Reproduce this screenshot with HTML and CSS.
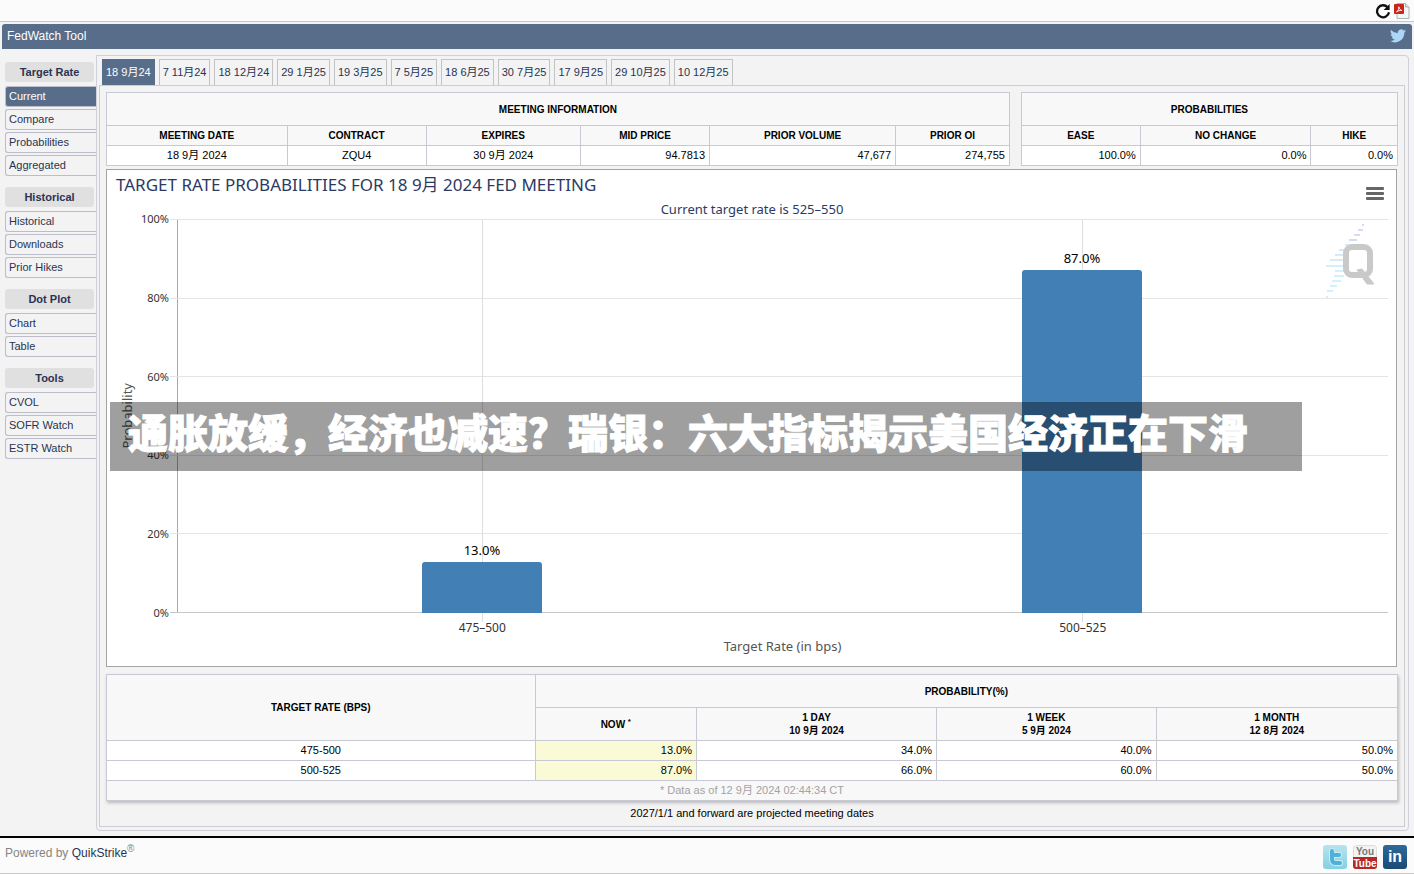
FILE: index.html
```html
<!DOCTYPE html>
<html lang="zh">
<head>
<meta charset="utf-8">
<title>FedWatch Tool</title>
<link rel="stylesheet" href="styles.css">
</head>
<body>
<div class="toolbar">
  <button class="icon-btn" type="button" aria-label="Refresh">
    <svg width="16" height="16" viewBox="0 0 16 16"><path d="M12.6 4.3A6 6 0 1 0 14 9.3" fill="none" stroke="#111" stroke-width="2.3"/><path d="M14.6 1v6H8.6z" fill="#111"/></svg>
  </button>
  <button class="icon-btn" type="button" aria-label="PDF">
    <svg width="16" height="16" viewBox="0 0 16 16"><path d="M3 .5h8.500l3.500 3.500v11.500H3z" fill="#f4f6f6" stroke="#a9b5b5"/><path d="M11.500.5v3.500H15" fill="#dde4e4" stroke="#a9b5b5"/><rect x="0" y="1" width="10" height="10" rx="1" fill="#c9251c"/><path d="M2.500 9C4.500 7.500 5 5.500 4.800 3.800 5.200 6 6.500 7.300 8 7.500 6 7.200 4 7.800 2.500 9z" fill="none" stroke="#fff" stroke-width=".9"/></svg>
  </button>
</div>
<header class="title-bar">
  <span>FedWatch Tool</span>
  <a href="#" class="bird" aria-label="Twitter"><svg width="16" height="14" viewBox="0 0 24 20"><path fill="#acd6f5" d="M24 2.400a10 10 0 0 1-2.800.8A5 5 0 0 0 23.300.4a10 10 0 0 1-3.100 1.200A4.900 4.900 0 0 0 11.800 6 14 14 0 0 1 1.700.9a4.900 4.900 0 0 0 1.500 6.600A5 5 0 0 1 1 6.900c0 2.400 1.700 4.400 3.900 4.900a5 5 0 0 1-2.200.1 4.900 4.900 0 0 0 4.600 3.400A9.900 9.900 0 0 1 0 17.300 14 14 0 0 0 21.500 4.900 10 10 0 0 0 24 2.400z"/></svg></a>
</header>

<div class="layout">
  <nav class="sidebar">
    <section class="group">
      <h2>Target Rate</h2>
      <a href="#" class="active">Current</a><a href="#">Compare</a><a href="#">Probabilities</a><a href="#">Aggregated</a>
    </section>
    <section class="group">
      <h2>Historical</h2>
      <a href="#">Historical</a><a href="#">Downloads</a><a href="#">Prior Hikes</a>
    </section>
    <section class="group">
      <h2>Dot Plot</h2>
      <a href="#">Chart</a><a href="#">Table</a>
    </section>
    <section class="group">
      <h2>Tools</h2>
      <a href="#">CVOL</a><a href="#">SOFR Watch</a><a href="#">ESTR Watch</a>
    </section>
  </nav>

  <main class="panel">
    <div class="tabs">
      <a href="#" class="active">18 9月24</a><a href="#">7 11月24</a><a href="#">18 12月24</a><a href="#">29 1月25</a><a href="#">19 3月25</a><a href="#">7 5月25</a><a href="#">18 6月25</a><a href="#">30 7月25</a><a href="#">17 9月25</a><a href="#">29 10月25</a><a href="#">10 12月25</a>
    </div>
    <div class="content">
      <div class="info">
        <table class="grid meeting">
          <colgroup><col class="w20"><col class="w15"><col class="w17"><col class="w14"><col class="w21"><col></colgroup>
          <thead>
            <tr class="tall"><th colspan="6">MEETING INFORMATION</th></tr>
            <tr><th>MEETING DATE</th><th>CONTRACT</th><th>EXPIRES</th><th>MID PRICE</th><th>PRIOR VOLUME</th><th>PRIOR OI</th></tr>
          </thead>
          <tbody>
            <tr><td class="mid">18 9月 2024</td><td class="mid">ZQU4</td><td class="mid">30 9月 2024</td><td>94.7813</td><td>47,677</td><td>274,755</td></tr>
          </tbody>
        </table>
        <table class="grid odds">
          <colgroup><col class="w32"><col class="w45"><col></colgroup>
          <thead>
            <tr class="tall"><th colspan="3">PROBABILITIES</th></tr>
            <tr><th>EASE</th><th>NO CHANGE</th><th>HIKE</th></tr>
          </thead>
          <tbody>
            <tr><td>100.0%</td><td>0.0%</td><td>0.0%</td></tr>
          </tbody>
        </table>
      </div>

      <section class="chart">
        <h1>TARGET RATE PROBABILITIES FOR 18 9月 2024 FED MEETING</h1>
        <p class="subtitle">Current target rate is 525–550</p>
        <button class="menu" type="button" aria-label="Chart menu"><i></i><i></i><i></i></button>
        <div class="plot-row">
          <div class="y-title"><span>Probability</span></div>
          <div class="y-labels"><span>100%</span><span>80%</span><span>60%</span><span>40%</span><span>20%</span><span>0%</span></div>
          <div class="plot">
            <div class="bands"><i></i><i></i><i></i><i></i><i></i></div>
            <svg class="watermark" width="50" height="76" viewBox="0 0 50 76">
              <g stroke-width="2">
                <path stroke="#d3dbf5" d="M36 2h2M32 7h5M28 12h6M23 17h8"/>
                <path stroke="#d5ecf8" d="M19 22h8M13 27h8M9 32h9M4 37h14"/>
                <path stroke="#d3f1fb" d="M0 43h18M9 48h9M8 53h10M6 58h9M4 63h7M1 68h6M0 74h2"/>
              </g>
              <rect x="20" y="24" width="24" height="28" rx="6" fill="none" stroke="#c9c9c9" stroke-width="6"/>
              <path d="M31 47l5-1 12 15h-7z" fill="#c9c9c9" stroke="#c9c9c9"/>
            </svg>
            <div class="bars">
              <div class="slot"><span>13.0%</span><div class="bar" style="height:13%"></div></div>
              <div class="slot"><span>87.0%</span><div class="bar" style="height:87%"></div></div>
            </div>
          </div>
        </div>
        <div class="x-axis">
          <div class="x-labels"><span>475–500</span><span>500–525</span></div>
          <p>Target Rate (in bps)</p>
        </div>
        <div class="caption">通胀放缓，经济也减速？瑞银：六大指标揭示美国经济正在下滑</div>
      </section>

      <table class="grid rates">
        <colgroup><col class="r1"><col class="r2"><col class="r3"><col class="r4"><col></colgroup>
        <thead>
          <tr class="tall"><th rowspan="2">TARGET RATE (BPS)</th><th colspan="4">PROBABILITY(%)</th></tr>
          <tr class="tall"><th>NOW <sup>*</sup></th><th>1 DAY<br>10 9月 2024</th><th>1 WEEK<br>5 9月 2024</th><th>1 MONTH<br>12 8月 2024</th></tr>
        </thead>
        <tbody>
          <tr><td class="mid">475-500</td><td class="now">13.0%</td><td>34.0%</td><td>40.0%</td><td>50.0%</td></tr>
          <tr><td class="mid">500-525</td><td class="now">87.0%</td><td>66.0%</td><td>60.0%</td><td>50.0%</td></tr>
        </tbody>
        <tfoot>
          <tr><td colspan="5" class="asof">* Data as of 12 9月 2024 02:44:34 CT</td></tr>
        </tfoot>
      </table>
      <p class="note">2027/1/1 and forward are projected meeting dates</p>
    </div>
  </main>
</div>

<footer class="footer">
  <p>Powered by <a href="#">QuikStrike</a><sup>®</sup></p>
  <div class="social">
    <a href="#" aria-label="Twitter"><svg width="24" height="24" viewBox="0 0 24 24"><defs><linearGradient id="tw" x2="0" y2="1"><stop offset="0" stop-color="#b5e4ee"/><stop offset="1" stop-color="#85d0e3"/></linearGradient></defs><rect width="24" height="24" rx="3" fill="url(#tw)"/><path d="M9 6v8q0 4 4 4h4M9 10h7" fill="none" stroke="#c9edf5" stroke-width="6" stroke-linecap="round"/><path d="M9 6v8q0 4 4 4h4M9 10h7" fill="none" stroke="#4fb0da" stroke-width="4" stroke-linecap="round"/></svg></a>
    <a href="#" aria-label="YouTube"><svg width="24" height="24" viewBox="0 0 24 24"><rect x=".5" y=".5" width="23" height="23" rx="3" fill="#f3f3f3" stroke="#dcdcdc"/><path d="M0 12h24v9a3 3 0 0 1-3 3H3a3 3 0 0 1-3-3z" fill="#b5282a"/><text x="12" y="10" class="yt you">You</text><text x="12" y="22" class="yt tube">Tube</text></svg></a>
    <a href="#" aria-label="LinkedIn"><svg width="24" height="24" viewBox="0 0 24 24"><defs><linearGradient id="li" x2="0" y2="1"><stop offset="0" stop-color="#2c6a9b"/><stop offset="1" stop-color="#1b4a75"/></linearGradient></defs><rect width="24" height="24" rx="3" fill="url(#li)"/><text x="12" y="17" class="li">in</text></svg></a>
  </div>
</footer>
</body>
</html>
```

FILE: styles.css
```css
* { box-sizing: border-box; }
body {
  margin: 0;
  min-height: 100vh;
  display: flex;
  flex-direction: column;
  background: #f3f3f3;
  color: #000;
  font: 11px/16px "Liberation Sans", Arial, "Noto Sans CJK SC", sans-serif;
}
h1, h2, p { margin: 0; font-weight: normal; }
a { color: #2a3352; text-decoration: none; }
button { border: 0; padding: 0; background: none; cursor: pointer; }
svg { display: block; }

.toolbar {
  height: 22px;
  display: flex;
  justify-content: flex-end;
  align-items: center;
  gap: 3px;
  padding-right: 4px;
  background: #fbfbfb;
  border-bottom: 1px solid #c6c6c6;
}
.title-bar {
  margin: 2px 2px 0;
  height: 25px;
  padding: 0 6px 2px 5px;
  display: flex;
  justify-content: space-between;
  align-items: center;
  background: #576d89;
  border-radius: 3px 3px 0 0;
  color: #fff;
  font-size: 12px;
}
.layout {
  flex: 1;
  display: flex;
  padding: 6px 5px 5px;
}
.sidebar { width: 91px; padding-top: 7px; }
.group { display: flex; flex-direction: column; gap: 2px; margin-bottom: 11px; }
.group h2 {
  margin: 0 2px 2px 0;
  background: #e0e0e0;
  border-radius: 3px;
  color: #2a3352;
  font-size: 11px;
  font-weight: bold;
  line-height: 20px;
  text-align: center;
}
.group a {
  height: 21px;
  padding-left: 3px;
  line-height: 19px;
  border: 1px solid #bcbccb;
  border-right: 0;
  border-radius: 3px 0 0 3px;
}
.group .active { background: #576d89; color: #fff; }

.panel {
  flex: 1;
  min-width: 0;
  display: flex;
  flex-direction: column;
  padding: 3px 3px 3px 2px;
  border: 1px solid #cfd0d9;
  border-radius: 0 4px 4px 4px;
}
.tabs { display: flex; gap: 4px; padding-left: 3px; }
.tabs a {
  height: 26px;
  padding: 0 3px;
  line-height: 25px;
  border: 1px solid #c3c3c6;
  border-bottom: 0;
  white-space: nowrap;
}
.tabs .active { background: #576d89; border-color: #576d89; color: #fff; }
.content {
  flex: 1;
  display: flex;
  flex-direction: column;
  padding: 6px 6px 4px;
  border: 1px solid #cccdd3;
}
.info { display: flex; gap: 11px; }
.meeting { flex: 905; }
.odds { flex: 377; }

.grid {
  table-layout: fixed;
  border-collapse: collapse;
  width: 100%;
  background: #fff;
}
.grid th, .grid td { border: 1px solid #c8c9d3; height: 20px; line-height: 13px; }
.grid th { padding: 0; background: #f8f8f8; font-size: 10px; }
.grid .tall th { height: 33px; }
.grid td { padding: 0 4px; text-align: right; }
.grid .mid { text-align: center; }
.grid .now { background: #fafad7; }
.grid .asof { text-align: center; background: #f8f8f8; color: #a3a3a3; }
.grid sup { font-size: 8px; line-height: 0; }
.w20 { width: 20%; } .w15 { width: 15.4%; } .w17 { width: 17.1%; }
.w14 { width: 14.3%; } .w21 { width: 20.6%; }
.w32 { width: 31.6%; } .w45 { width: 45.4%; }
.r1 { width: 33.2%; } .r2 { width: 12.5%; } .r3 { width: 18.6%; } .r4 { width: 17%; }
.rates { box-shadow: 1px 2px 3px #bbb; }
.note { padding-top: 4px; margin-bottom: 1px; text-align: center; }

.chart {
  position: relative;
  flex: 1;
  min-height: 320px;
  display: flex;
  flex-direction: column;
  margin: 3px 1px 7px 0;
  padding: 5px 8px 10px 9px;
  background: #fff;
  border: 1px solid #a4a4a4;
  color: #333;
  font-family: "Noto Sans", "Noto Sans CJK SC", sans-serif;
}
.chart h1 { color: #2c3a63; font-size: 17px; line-height: 20px; }
.subtitle { margin-top: 4px; color: #2c3a63; font-size: 13px; line-height: 20px; text-align: center; }
.menu {
  position: absolute;
  top: 17px;
  right: 12px;
  width: 18px;
  display: flex;
  flex-direction: column;
  gap: 2px;
}
.menu i { width: 100%; height: 3px; border-radius: 1px; background: #666; }
.plot-row { flex: 1; display: flex; }
.y-title { width: 22px; display: flex; align-items: center; justify-content: center; color: #555; font-size: 13px; }
.y-title span { writing-mode: vertical-rl; rotate: 180deg; }
.y-labels {
  width: 39px;
  margin: -8px 0;
  padding-right: 8px;
  display: flex;
  flex-direction: column;
  justify-content: space-between;
  text-align: right;
}
.plot { flex: 1; display: grid; grid-template: 100% / 100%; border-left: 1px solid #a8a8a8; }
.plot > * { grid-area: 1 / 1; }
.bands { display: flex; flex-direction: column; margin-left: -8px; border-bottom: 1px solid #c6c6c6; }
.bands i { flex: 1; border-top: 1px solid #e4e4e4; }
.watermark { justify-self: end; margin: 4px 12px 0 0; }
.bars { display: flex; padding: 0 6px 0 4px; }
.slot {
  flex: 1;
  display: flex;
  flex-direction: column;
  justify-content: flex-end;
  align-items: center;
  background: linear-gradient(#dedede, #dedede) center / 1px 100% no-repeat;
  color: #000;
  font-size: 13px;
}
.slot span { line-height: 16px; margin-bottom: 4px; }
.bar { flex: none; width: 20%; background: #417fb5; border-radius: 3px 3px 0 0; }
.x-axis { margin-left: 61px; text-align: center; color: #555; font-size: 13px; line-height: 20px; }
.x-labels { display: flex; padding: 0 5px; color: #333; font-size: 12px; line-height: 16px; }
.x-labels span {
  flex: 1;
  padding-top: 7px;
  background: linear-gradient(#dedede, #dedede) top / 1px 9px no-repeat;
}
.caption {
  position: absolute;
  top: 232px;
  left: 3px;
  right: 94px;
  padding: 0 18px 10px;
  background: rgba(0, 0, 0, .376);
  color: #fff;
  font: 900 40px/59px "Noto Sans CJK SC", sans-serif;
  -webkit-text-stroke: 1px #fff;
  white-space: nowrap;
}

.footer {
  height: 38px;
  display: flex;
  justify-content: space-between;
  padding: 7px 7px 0 5px;
  background: #fbfbfb;
  border-top: 2px solid #000;
  border-bottom: 1px solid #c6c6c6;
  color: #858585;
  font-size: 12px;
}
.footer sup { font-size: 10px; line-height: 0; }
.social { display: flex; gap: 6px; }
.yt { font: bold 10px "Liberation Sans", sans-serif; text-anchor: middle; }
.you { fill: #777; }
.tube { fill: #fff; }
.li { font: bold 16px "Liberation Sans", sans-serif; text-anchor: middle; fill: #fff; }
```
